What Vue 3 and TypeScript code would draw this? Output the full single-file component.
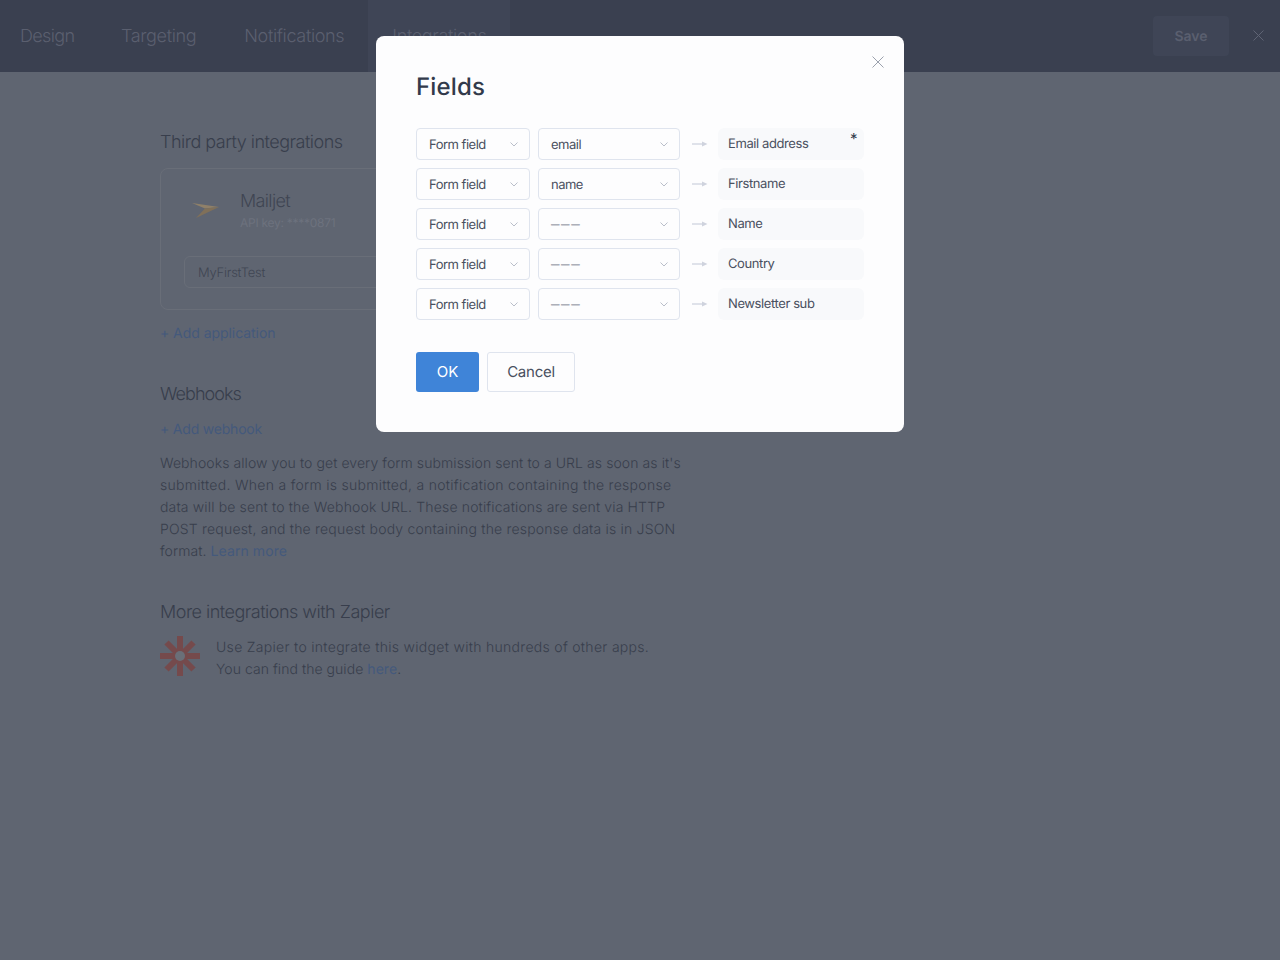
<script setup lang="ts">
const tabs = ['Design', 'Targeting', 'Notifications', 'Integrations']
const rows = [
  { value: 'email', label: 'Email address', required: true },
  { value: 'name', label: 'Firstname', required: false },
  { value: '–––', label: 'Name', required: false },
  { value: '–––', label: 'Country', required: false },
  { value: '–––', label: 'Newsletter sub', required: false },
]
</script>

<template>
  <div class="page">
    <header class="topbar">
      <nav class="tabs">
        <span v-for="(t, i) in tabs" :key="t" class="tab" :class="{ active: i === 3 }">{{ t }}</span>
      </nav>
      <div class="actions">
        <span class="save">Save</span>
        <svg class="x-top" width="11" height="11" viewBox="0 0 11 11"><path d="M.5.5l10 10M10.500.5l-10 10" /></svg>
      </div>
    </header>

    <main class="content">
      <h2 class="h">Third party integrations</h2>
      <section class="card">
        <div class="app">
          <svg class="plane" width="28" height="18" viewBox="0 0 28 18">
            <path d="M0 2 L27 6 L13 7.500 Z" fill="#8f8069" />
            <path d="M27 6 L4 17 L13 7.500 Z" fill="#807059" />
          </svg>
          <div>
            <div class="app-name">Mailjet</div>
            <div class="app-key">API key: ****0871</div>
          </div>
        </div>
        <div class="app-input">MyFirstTest</div>
      </section>
      <a class="link add">+ Add application</a>

      <h2 class="h hooks">Webhooks</h2>
      <a class="link add2">+ Add webhook</a>
      <p class="para">
        <span class="ln l1">Webhooks allow you to get every form submission sent to a URL as soon as it's</span>
        <span class="ln l2">submitted. When a form is submitted, a notification containing the response</span>
        <span class="ln l3">data will be sent to the Webhook URL. These notifications are sent via HTTP</span>
        <span class="ln l4">POST request, and the request body containing the response data is in JSON</span>
        <span class="ln">format. <a class="link">Learn more</a></span>
      </p>

      <h2 class="h zap-title">More integrations with Zapier</h2>
      <div class="zap">
        <svg width="40" height="40" viewBox="0 0 40 40" class="zap-logo">
          <g stroke="#754a4c" stroke-width="6" fill="none">
            <path d="M20 0V40M0 20H40M6.500 6.500L33.500 33.500M33.500 6.500L6.500 33.500" />
          </g>
          <circle cx="20" cy="20" r="5" fill="#6a6f78" />
        </svg>
        <p class="zap-text">
          <span class="ln z1">Use Zapier to integrate this widget with hundreds of other apps.</span>
          <span class="ln z2">You can find the guide <a class="link">here</a>.</span>
        </p>
      </div>
    </main>

    <div class="layer">
      <div class="modal">
        <svg class="x-modal" width="12" height="12" viewBox="0 0 12 12"><path d="M.5.5l11 11M11.500.5l-11 11" /></svg>
        <h1 class="title">Fields</h1>
        <div class="rows">
          <div v-for="r in rows" :key="r.label" class="row">
            <div class="select s1">
              <span class="val">Form field</span>
              <svg width="8" height="5" viewBox="0 0 8 5"><path d="M.5.500L4 4 7.500.500" /></svg>
            </div>
            <div class="select s2">
              <span class="val" :class="{ dash: r.value === '–––' }">{{ r.value }}</span>
              <svg width="8" height="5" viewBox="0 0 8 5"><path d="M.5.500L4 4 7.500.500" /></svg>
            </div>
            <svg class="arrow" width="16" height="6" viewBox="0 0 16 6">
              <path d="M0 2H10V4H0Z" fill="#dfe2ea" />
              <path d="M10 .5L15.500 3 10 5.500Z" fill="#cfd3de" />
            </svg>
            <div class="field">
              {{ r.label }}
              <span v-if="r.required" class="star">*</span>
            </div>
          </div>
        </div>
        <div class="buttons">
          <button class="btn ok">OK</button>
          <button class="btn cancel">Cancel</button>
        </div>
      </div>
    </div>
  </div>
</template>

<style>
body { background: #5f6571; }
</style>

<style scoped>
.page {
  position: relative;
  height: 960px;
  overflow: hidden;
  background: #5f6571;
  font-family: Inter, "Noto Sans", sans-serif;
  text-rendering: geometricPrecision;
  color: #3c4250;
}
.topbar {
  height: 72px;
  background: #3a4050;
  display: flex;
  justify-content: space-between;
}
.tabs { display: flex; }
.tab {
  padding: 0 24px;
  font-size: 18px;
  font-weight: 300;
  line-height: 73px;
  color: #5a5f6f;
  letter-spacing: -0.35px;
}
.tab:first-child { padding: 0 22.5px 0 20px; letter-spacing: -0.65px; }
.tab.active { background: #3f4556; }
.actions { display: flex; align-items: center; }
.save {
  width: 76px;
  height: 40px;
  line-height: 41px;
  text-align: center;
  background: #3f4556;
  border-radius: 4px;
  font-size: 14px;
  font-weight: 600;
  color: #5a5f6f;
  margin-right: 24px;
}
.x-top { margin-right: 16px; margin-top: -2px; }
.x-top path { stroke: #5f6474; fill: none; }
.content {
  width: 522px;
  margin-left: 160px;
  display: flex;
  flex-direction: column;
  align-items: flex-start;
}
.h {
  margin: 58px 0 0;
  font-size: 18px;
  font-weight: 350;
  line-height: 26px;
  color: #383e4c;
  letter-spacing: -0.5px;
}
.card {
  width: 520px;
  height: 142px;
  margin-top: 12px;
  border: 1px solid #696e78;
  border-radius: 8px;
  box-sizing: border-box;
  padding: 12px 23px;
}
.app { display: flex; align-items: center; height: 58px; }
.plane { margin: 0 20px 0 8px; }
.app-name { font-size: 18px; font-weight: 350; line-height: 25px; color: #3f4553; letter-spacing: -0.65px; }
.app-key { font-size: 12px; line-height: 18px; color: #6d727e; letter-spacing: -0.27px; }
.app-input {
  height: 32px;
  margin-top: 17px;
  border: 1px solid #696e78;
  border-radius: 6px;
  box-sizing: border-box;
  padding: 0 13px;
  font-size: 13px;
  font-weight: 350;
  line-height: 32px;
  color: #3f4553;
  letter-spacing: -0.25px;
}
.link { color: #44597c; font-weight: 400; }
.add { margin-top: 13px; font-size: 14px; line-height: 22px; letter-spacing: -0.05px; }
.h.hooks { margin-top: 37px; letter-spacing: -0.95px; }
.add2 { margin-top: 11px; font-size: 14px; line-height: 22px; letter-spacing: -0.2px; }
.para {
  margin: 12px 0 0;
  font-size: 14px;
  font-weight: 350;
  line-height: 22px;
  color: #383e4c;
}
.ln { display: block; white-space: nowrap; letter-spacing: 0.08px; }
.l1 { letter-spacing: 0.08px; }
.l2 { letter-spacing: 0.29px; }
.l3 { letter-spacing: 0.15px; }
.l4 { letter-spacing: 0.19px; }
.h.zap-title { margin-top: 37px; }
.zap { display: flex; gap: 16px; margin-top: 10px; }
.zap-logo { flex: none; }
.zap-text {
  margin: 1px 0 0;
  font-size: 14px;
  font-weight: 350;
  line-height: 22px;
  color: #383e4c;
}
.ln.z1 { letter-spacing: 0.3px; }
.ln.z2 { letter-spacing: 0.05px; }
.layer {
  position: absolute;
  inset: 0;
  display: flex;
  justify-content: center;
  align-items: flex-start;
  padding-top: 36px;
}
.modal {
  position: relative;
  width: 528px;
  height: 396px;
  box-sizing: border-box;
  padding: 34px 40px 40px;
  background: #fdfdfe;
  border-radius: 8px;
}
.x-modal { position: absolute; top: 20px; right: 20px; }
.x-modal path { stroke: #9ba1ad; fill: none; }
.title {
  margin: 0;
  font-size: 24px;
  font-weight: 500;
  line-height: 34px;
  color: #323a4b;
  letter-spacing: 0.15px;
}
.rows { display: flex; flex-direction: column; gap: 8px; margin-top: 24px; }
.row { display: flex; align-items: center; height: 32px; }
.select {
  height: 32px;
  box-sizing: border-box;
  display: flex;
  align-items: center;
  justify-content: space-between;
  padding: 0 11px 0 12px;
  border: 1px solid #dfe4ee;
  border-radius: 4px;
  font-size: 13px;
  letter-spacing: -0.5px;
  color: #4a5060;
}
.val { padding-top: 2px; }
.select svg path { stroke: #b9bec9; fill: none; }
.s1 { width: 114px; margin-right: 8px; }
.s2 { width: 142px; margin-right: 12px; }
.dash { color: #adb0b9; letter-spacing: 1.6px; font-size: 17px; font-weight: 500; line-height: 18px; }
.arrow { margin-right: 10px; }
.field {
  position: relative;
  width: 146px;
  height: 32px;
  box-sizing: border-box;
  padding-left: 10px;
  line-height: 32px;
  font-size: 13px;
  letter-spacing: -0.4px;
  color: #4a5060;
  background: #f8f9fb;
  border-radius: 6px;
}
.star { position: absolute; top: -4px; right: 7px; font-size: 15px; line-height: 30px; color: #323a4b; }
.buttons { display: flex; gap: 8px; margin-top: 32px; }
.btn {
  height: 40px;
  padding: 0 0 2px;
  border-radius: 3px;
  font-family: inherit;
  font-size: 15px;
  box-sizing: border-box;
  text-rendering: geometricPrecision;
}
.ok { width: 63px; background: #3f84d8; color: #fff; border: none; font-weight: 400; }
.cancel { width: 88px; background: #fdfdfe; color: #4a5060; border: 1px solid #dfe4ee; letter-spacing: -0.25px; }
</style>
